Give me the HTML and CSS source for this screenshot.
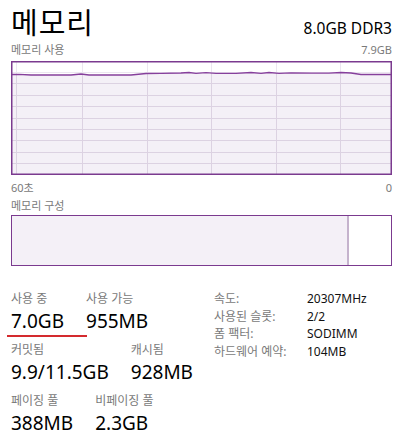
FILE: index.html
```html
<!DOCTYPE html>
<html lang="ko">
<head>
  <meta charset="UTF-8">
  <title>메모리</title>
  <link rel="stylesheet" href="styles.css">
</head>
<body>
  <div class="panel">
    <div class="header">
      <h1>메모리</h1>
      <span class="spec">8.0GB DDR3</span>
    </div>

    <div class="caption-row">
      <span>메모리 사용</span>
      <span>7.9GB</span>
    </div>
    <div class="graph">
      <svg width="381" height="114" viewBox="0 0 381 114">
        <g stroke="#ece6f0" stroke-width="1">
          <line x1="0" y1="11.5" x2="381" y2="11.5"/>
          <line x1="5.5" y1="0" x2="5.5" y2="14"/>
          <line x1="71.5" y1="0" x2="71.5" y2="14"/>
          <line x1="136.5" y1="0" x2="136.5" y2="14"/>
          <line x1="200.5" y1="0" x2="200.5" y2="14"/>
          <line x1="265.5" y1="0" x2="265.5" y2="14"/>
          <line x1="329.5" y1="0" x2="329.5" y2="14"/>
        </g>
        <path d="M0 13.5 L8 13.3 L20 14 L60 14 L70 13 L78 14 L120 14 L135 12.5 L150 12.3 L170 12 L178 11.5 L185 12.3 L195 11.7 L205 12.3 L225 12.3 L240 11.5 L250 12.3 L258 11.5 L268 12.3 L280 11.8 L300 12.2 L318 12.2 L330 11.5 L340 12 L350 13.5 L381 13.5 L381 114 L0 114 Z" fill="#f4f0f7"/>
        <g stroke="#dcd2e2" stroke-width="1">
          <line x1="0" y1="22.5" x2="381" y2="22.5"/>
          <line x1="0" y1="34.5" x2="381" y2="34.5"/>
          <line x1="0" y1="45.5" x2="381" y2="45.5"/>
          <line x1="0" y1="57.5" x2="381" y2="57.5"/>
          <line x1="0" y1="68.5" x2="381" y2="68.5"/>
          <line x1="0" y1="79.5" x2="381" y2="79.5"/>
          <line x1="0" y1="91.5" x2="381" y2="91.5"/>
          <line x1="0" y1="102.5" x2="381" y2="102.5"/>
          <line x1="5.5" y1="14" x2="5.5" y2="114"/>
          <line x1="71.5" y1="14" x2="71.5" y2="114"/>
          <line x1="136.5" y1="12" x2="136.5" y2="114"/>
          <line x1="200.5" y1="12" x2="200.5" y2="114"/>
          <line x1="265.5" y1="12" x2="265.5" y2="114"/>
          <line x1="329.5" y1="12" x2="329.5" y2="114"/>
        </g>
        <path d="M0 13.5 L8 13.3 L20 14 L60 14 L70 13 L78 14 L120 14 L135 12.5 L150 12.3 L170 12 L178 11.5 L185 12.3 L195 11.7 L205 12.3 L225 12.3 L240 11.5 L250 12.3 L258 11.5 L268 12.3 L280 11.8 L300 12.2 L318 12.2 L330 11.5 L340 12 L350 13.5 L381 13.5" fill="none" stroke="#86409c" stroke-width="1.3"/>
        <rect x="0.75" y="0.75" width="379.5" height="112.5" fill="none" stroke="#7b3a8f" stroke-width="1.5"/>
      </svg>
    </div>
    <div class="caption-row axis">
      <span>60초</span>
      <span>0</span>
    </div>

    <div class="caption-row">
      <span>메모리 구성</span>
    </div>
    <div class="composition">
      <div class="comp-used"></div>
      <div class="comp-sep"></div>
      <div class="comp-free"></div>
    </div>

    <div class="stats">
      <div class="stats-left">
        <div class="stat-row">
          <div class="stat in-use">
            <div class="stat-label">사용 중</div>
            <div class="stat-value">7.0GB</div>
          </div>
          <div class="stat">
            <div class="stat-label">사용 가능</div>
            <div class="stat-value">955MB</div>
          </div>
        </div>
        <div class="stat-row">
          <div class="stat">
            <div class="stat-label">커밋됨</div>
            <div class="stat-value">9.9/11.5GB</div>
          </div>
          <div class="stat">
            <div class="stat-label">캐시됨</div>
            <div class="stat-value">928MB</div>
          </div>
        </div>
        <div class="stat-row">
          <div class="stat">
            <div class="stat-label">페이징 풀</div>
            <div class="stat-value">388MB</div>
          </div>
          <div class="stat">
            <div class="stat-label">비페이징 풀</div>
            <div class="stat-value">2.3GB</div>
          </div>
        </div>
      </div>

      <div class="specs">
        <span class="spec-label">속도:</span><span class="spec-value">20307MHz</span>
        <span class="spec-label">사용된 슬롯:</span><span class="spec-value">2/2</span>
        <span class="spec-label">폼 팩터:</span><span class="spec-value">SODIMM</span>
        <span class="spec-label">하드웨어 예약:</span><span class="spec-value">104MB</span>
      </div>
    </div>
  </div>
</body>
</html>
```

FILE: styles.css
```css
body {
  margin: 0;
  background-color: #fff;
  font-family: "Noto Sans", "Noto Sans CJK KR", sans-serif;
  color: #000;
}

.panel {
  width: 381px;
  padding: 0 13px 0 11px;
}

.header {
  display: flex;
  justify-content: space-between;
  align-items: baseline;
  height: 42px;
}

h1 {
  margin: 0;
  font-size: 29px;
  font-weight: normal;
  letter-spacing: 1px;
  line-height: 46px;
}

.spec {
  font-size: 15.5px;
}

.caption-row {
  display: flex;
  justify-content: space-between;
  font-size: 11px;
  line-height: 16px;
  color: #7a7a7a;
}

.graph {
  margin-top: 3px;
  height: 114px;
}

.graph svg {
  display: block;
}

.axis {
  margin-top: 5px;
  margin-bottom: 2px;
}

.composition {
  display: flex;
  height: 51px;
  margin-top: 1px;
  border: 1.5px solid #7b3a8f;
  box-sizing: border-box;
}

.comp-used {
  flex: 1;
  background-color: #f4f0f7;
}

.comp-sep {
  width: 2px;
  background-color: #c5b3cd;
}

.comp-free {
  width: 42px;
  background-color: #fff;
}

.stats {
  display: grid;
  grid-template-columns: 203px auto;
  margin-top: 25px;
}

.stat-row {
  display: flex;
  gap: 22px;
  margin-bottom: 10px;
}

.stat {
  position: relative;
}

.stat-label {
  font-size: 12px;
  line-height: 16px;
  color: #7a7a7a;
}

.stat-value {
  font-size: 19px;
  line-height: 22px;
  margin-top: 3px;
}

.in-use::after {
  content: "";
  position: absolute;
  left: -4px;
  right: -23px;
  bottom: -5px;
  height: 2px;
  background-color: #d42a2e;
}

.specs {
  display: grid;
  grid-template-columns: 93px auto;
  align-content: start;
  font-size: 12px;
  line-height: 17.5px;
  margin-top: -1px;
}

.spec-label {
  color: #7a7a7a;
}

.spec-value {
  color: #111;
}
```
